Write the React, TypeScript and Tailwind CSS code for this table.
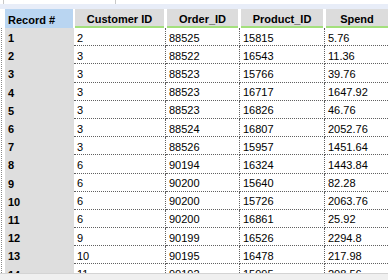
import React from "react";

const rows: [string, string, string, string, string][] = [
  ["1", "2", "88525", "15815", "5.76"],
  ["2", "3", "88522", "16543", "11.36"],
  ["3", "3", "88523", "15766", "39.76"],
  ["4", "3", "88523", "16717", "1647.92"],
  ["5", "3", "88523", "16826", "46.76"],
  ["6", "3", "88524", "16807", "2052.76"],
  ["7", "3", "88526", "15957", "1451.64"],
  ["8", "6", "90194", "16324", "1443.84"],
  ["9", "6", "90200", "15640", "82.28"],
  ["10", "6", "90200", "15726", "2063.76"],
  ["11", "6", "90200", "16861", "25.92"],
  ["12", "9", "90199", "16526", "2294.8"],
  ["13", "10", "90195", "16478", "217.98"],
  ["14", "11", "90192", "15995", "208.56"],
];

function GrayHeader({ label, w, last }: { label: string; w: string; last?: boolean }) {
  return (
    <div className={`${w} shrink-0 flex`}>
      <div
        className={`flex-1 ml-[1px] ${last ? "" : "mr-[2px]"} bg-[#dcdcdc] border-b-2 border-[#a3e07c] flex items-center justify-center pt-[4px] font-bold text-black`}
      >
        {label}
      </div>
    </div>
  );
}

export default function App() {
  return (
    <div
      className="w-[388px] h-[280px] overflow-hidden bg-white flex flex-col text-[11px] leading-none text-black"
      style={{ fontFamily: '"Liberation Sans", Arial, sans-serif' }}
    >
      {/* top strip */}
      <div className="h-[4px] shrink-0 flex">
        <div className="w-[3px]" />
        <div className="w-[1px] bg-[#c8c8c8]" />
        <div className="w-[111px]" />
        <div className="w-[1px] bg-[#c8c8c8]" />
      </div>
      <div className="h-[5px] shrink-0 bg-[#e8edf8]" />

      {/* header */}
      <div className="h-[19px] shrink-0 flex">
        <div className="w-[5px] shrink-0" />
        <div className="w-[69px] shrink-0 flex">
          <div className="flex-1 mr-[1px] bg-[#b9d5f1] flex items-center pl-[3px] pt-[3px] font-bold">
            Record #
          </div>
        </div>
        <GrayHeader label="Customer ID" w="w-[92px]" />
        <GrayHeader label="Order_ID" w="w-[74px]" />
        <GrayHeader label="Product_ID" w="w-[85px]" />
        <GrayHeader label="Spend" w="w-[63px]" last />
      </div>

      {/* body */}
      <div className="flex-1 overflow-hidden flex">
        <div className="w-[5px] shrink-0 flex">
          <div className="w-[1px]" />
          <div className="w-[1px] border-l border-dotted border-[#8a8a8a]" />
        </div>
        <div className="flex-1 flex flex-col">
          {rows.map((r) => (
            <div key={r[0]} className="h-[18.2px] shrink-0 flex">
              <div className="w-[69px] shrink-0 bg-[#dedede] flex items-center pl-[3px] pt-[3px] font-bold">
                {r[0]}
              </div>
              <div className="w-[92px] shrink-0 border-b border-r border-dotted border-[#606060] flex items-center pl-[3px] pt-[3px]">
                {r[1]}
              </div>
              <div className="w-[74px] shrink-0 border-b border-r border-dotted border-[#606060] flex items-center pl-[3px] pt-[3px]">
                {r[2]}
              </div>
              <div className="w-[85px] shrink-0 border-b border-r border-dotted border-[#606060] flex items-center pl-[3px] pt-[3px]">
                {r[3]}
              </div>
              <div className="flex-1 border-b border-dotted border-[#606060] flex items-center pl-[3px] pt-[3px]">
                {r[4]}
              </div>
            </div>
          ))}
        </div>
      </div>

      {/* bottom bar */}
      <div className="h-[7px] shrink-0 bg-[#f0f0f0] border-t border-[#d4d4d4]" />
    </div>
  );
}
